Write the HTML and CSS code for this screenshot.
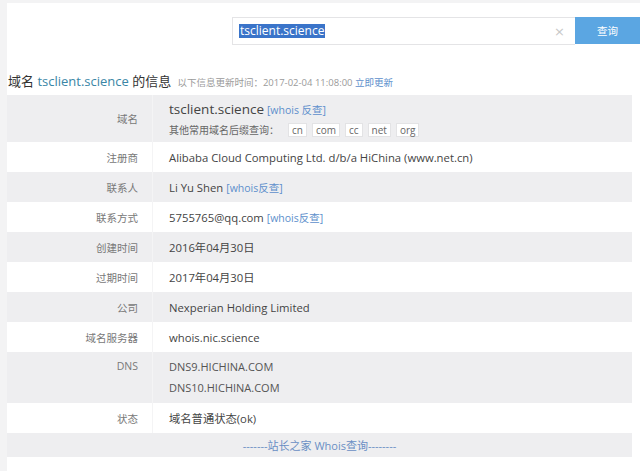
FILE: index.html
```html
<!DOCTYPE html>
<html lang="zh-CN">
<head>
<meta charset="utf-8">
<title>域名 tsclient.science 的信息</title>
<link rel="stylesheet" href="styles.css">
</head>
<body>
<div class="page">
  <div class="search">
    <div class="search-box">
      <span class="search-value">tsclient.science</span>
      <span class="clear">×</span>
    </div>
    <div class="search-btn">查询</div>
  </div>

  <div class="title">
    <span class="t-main">域名 <span class="t-domain">tsclient.science</span> 的信息</span>
    <span class="t-sub">以下信息更新时间：2017-02-04 11:08:00 <span class="link">立即更新</span></span>
  </div>

  <table class="info">
    <tr class="odd first">
      <td class="lbl">域名</td>
      <td class="val">
        <div class="dom-line"><span class="dom">tsclient.science</span> <span class="link">[whois 反查]</span></div>
        <div class="suffix-line">其他常用域名后缀查询：
          <span class="tag">cn</span><span class="tag">com</span><span class="tag">cc</span><span class="tag">net</span><span class="tag">org</span>
        </div>
      </td>
    </tr>
    <tr><td class="lbl">注册商</td><td class="val">Alibaba Cloud Computing Ltd. d/b/a HiChina (www.net.cn)</td></tr>
    <tr class="odd"><td class="lbl">联系人</td><td class="val">Li Yu Shen <span class="link">[whois反查]</span></td></tr>
    <tr><td class="lbl">联系方式</td><td class="val">5755765@qq.com <span class="link">[whois反查]</span></td></tr>
    <tr class="odd"><td class="lbl">创建时间</td><td class="val">2016年04月30日</td></tr>
    <tr><td class="lbl">过期时间</td><td class="val">2017年04月30日</td></tr>
    <tr class="odd"><td class="lbl">公司</td><td class="val">Nexperian Holding Limited</td></tr>
    <tr><td class="lbl">域名服务器</td><td class="val">whois.nic.science</td></tr>
    <tr class="odd dns"><td class="lbl">DNS</td><td class="val"><div class="dns-line">DNS9.HICHINA.COM</div><div class="dns-line">DNS10.HICHINA.COM</div></td></tr>
    <tr><td class="lbl">状态</td><td class="val">域名普通状态(ok)</td></tr>
    <tr class="odd foot"><td colspan="2">-------站长之家 Whois查询--------</td></tr>
  </table>
</div>
</body>
</html>
```

FILE: styles.css
```css
html, body {
  margin: 0;
  padding: 0;
}
body {
  background: #f3f3f4;
  font-family: "Open Sans", "Noto Sans CJK SC", sans-serif;
  color: #444;
  width: 640px;
  height: 471px;
  overflow: hidden;
}
.page {
  margin: 3px 0 0 7px;
  background: #fff;
  height: 468px;
}
.search {
  display: flex;
  justify-content: flex-end;
  padding-top: 14px;
}
.search-box {
  box-sizing: border-box;
  width: 343px;
  height: 28px;
  border: 1px solid #e4e4e6;
  border-right: none;
  display: flex;
  align-items: center;
  justify-content: space-between;
  padding: 0 10px 0 6px;
}
.search-value {
  background: #3a74c9;
  color: #fff;
  font-size: 12px;
  line-height: 14px;
  padding: 0 1px;
}
.clear {
  color: #c8c8c8;
  font-size: 13px;
  font-family: "DejaVu Sans", sans-serif;
}
.search-btn {
  width: 65px;
  height: 27px;
  background: #5ba6e2;
  color: #fff;
  font-size: 10.5px;
  display: flex;
  align-items: center;
  justify-content: center;
}
.title {
  padding: 25px 0 0 1px;
  height: 25px;
  line-height: 20px;
  white-space: nowrap;
}
.t-main {
  font-size: 13px;
  color: #333;
}
.t-domain {
  color: #3a86a6;
}
.t-sub {
  font-size: 9.5px;
  color: #9a9a9a;
  margin-left: 2px;
}
.link {
  color: #5d8fcc;
}
.info {
  border-collapse: collapse;
  width: 625px;
  font-size: 11.3px;
}
.info td {
  padding: 0;
  height: 30px;
}
.info tr.odd td {
  background: #eeeef0;
}
.lbl {
  width: 131px;
  text-align: right;
  padding-right: 14px !important;
  color: #787878;
  font-size: 10.5px;
  border-right: 1px solid #f4f4f5;
}
.val {
  padding-left: 16px !important;
  color: #444;
}
.val .link {
  font-size: 10.5px;
}
.first td {
  height: 47px !important;
}
.dom-line {
  line-height: 19px;
}
.dom {
  font-size: 13.5px;
  color: #444;
}
.dom-line .link {
  font-size: 10.5px;
}
.suffix-line {
  font-size: 10px;
  color: #666;
  line-height: 15px;
  margin-top: 3px;
  display: flex;
  align-items: center;
}
.tag {
  background: #fff;
  border: 1px solid #e3e3e5;
  font-size: 10px;
  line-height: 12px;
  padding: 0 3px;
  margin-left: 5px;
  color: #666;
}
.suffix-line .tag:first-child {
  margin-left: 9px;
}
.dns td {
  height: 51px !important;
  vertical-align: top;
  box-sizing: border-box;
  padding-top: 4px;
}
.dns .lbl {
  line-height: 21px;
}
.dns-line {
  line-height: 21px;
  font-size: 11px;
  color: #555;
}
.foot td {
  height: 24px !important;
  text-align: center;
  font-size: 11px;
  color: #6a8fc4;
}
```
